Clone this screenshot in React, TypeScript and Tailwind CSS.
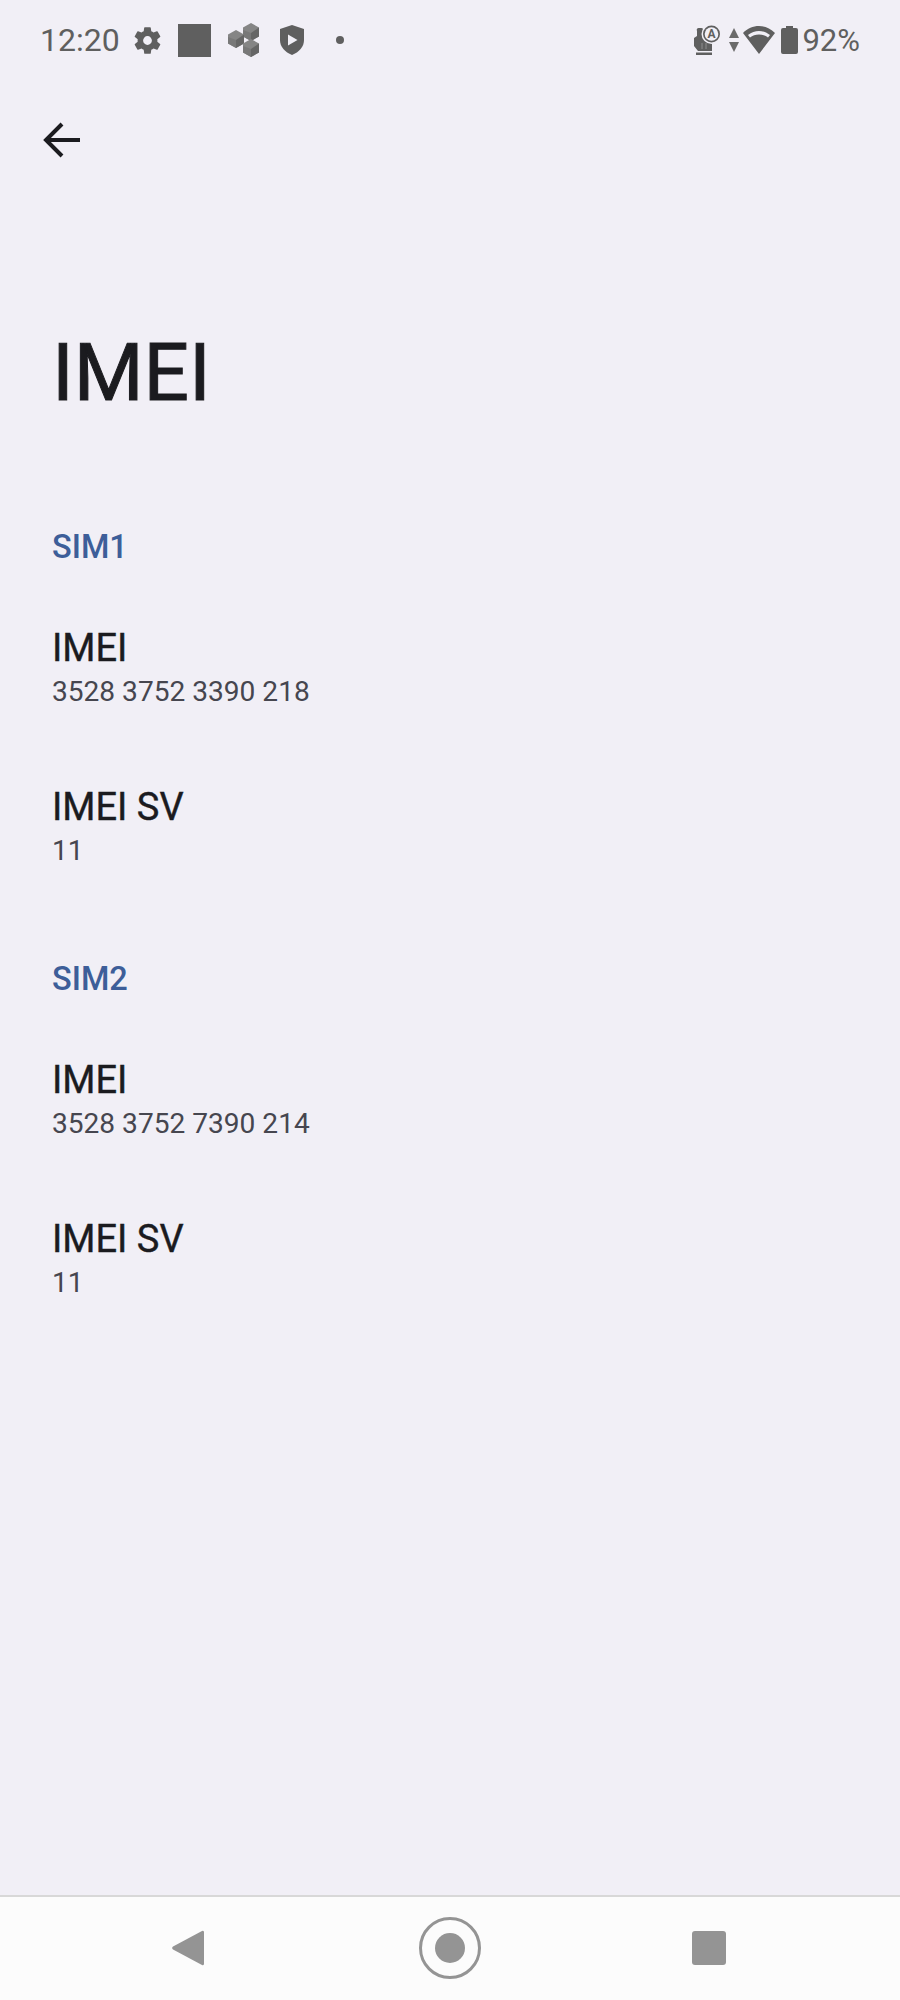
import React from "react";

const SettingsGear = () => (
  <svg viewBox="0 0 24 24" className="w-[33px] h-[33px] fill-[#5f5f5f]">
    <path d="M19.14 12.94c.04-.3.06-.61.06-.94s-.02-.64-.07-.94l2.03-1.58a.5.5 0 0 0 .12-.64l-1.92-3.32a.5.5 0 0 0-.61-.22l-2.39.96a7 7 0 0 0-1.62-.94l-.36-2.54a.48.48 0 0 0-.48-.41h-3.84a.48.48 0 0 0-.47.41l-.36 2.54c-.59.24-1.13.57-1.62.94l-2.39-.96a.49.49 0 0 0-.59.22L2.74 8.84a.48.48 0 0 0 .12.64l2.03 1.58c-.05.3-.09.63-.09.94s.02.64.07.94l-2.03 1.58a.5.5 0 0 0-.12.64l1.92 3.32c.12.22.37.29.59.22l2.39-.96c.5.38 1.03.7 1.62.94l.36 2.54c.05.24.24.41.48.41h3.84c.24 0 .44-.17.47-.41l.36-2.54c.59-.24 1.13-.56 1.62-.94l2.39.96c.22.08.47 0 .59-.22l1.92-3.32a.48.48 0 0 0-.12-.64zM12 15.200A3.200 3.200 0 1 1 12 8.800a3.200 3.200 0 0 1 0 6.400z" />
  </svg>
);

const Cube = ({ x, y }: { x: number; y: number }) => (
  <g transform={`translate(${x} ${y})`}>
    <path d="M0-9L8-4.500V4.500L0 9-8 4.500V-4.500z" fill="#858585" />
    <path d="M8-4.500V4.500L0 9V1z" fill="#666666" />
    <path d="M-8 4.500L0 9V1L-8-2z" fill="#787878" />
  </g>
);

const Cubes = () => (
  <svg viewBox="0 0 34 34" className="w-[34px] h-[34px]">
    <Cube x={24} y={9} />
    <Cube x={9} y={16} />
    <Cube x={24} y={25} />
  </svg>
);

const Shield = () => (
  <svg viewBox="0 0 26 30" className="w-[26px] h-[30px]">
    <path d="M13 0L25 4v11c0 7-5 12-12 15C6 27 1 22 1 15V4z" fill="#5f5f5f" />
    <path d="M9 9.500l9.500 5.500L9 20.500z" fill="#f1eff6" />
  </svg>
);

const HandBadge = () => (
  <svg viewBox="0 0 28 30" className="w-[28px] h-[30px]">
    <path d="M3 27.500h16V30H3z" fill="#5f5f5f" />
    <path d="M4 6a2 2 0 0 1 2-3h2a2 2 0 0 1 2 3v8l9 2v10H5l-4-5v-8l3-2z" fill="#5f5f5f" />
    <path d="M9 18v6M13 18v6" stroke="#8f8f8f" strokeWidth="1" />
    <circle cx="18.500" cy="9" r="10" fill="#f1eff6" />
    <circle cx="18.500" cy="9" r="8.500" fill="#5f5f5f" />
    <circle cx="18.500" cy="9" r="6.800" fill="#f1eff6" />
    <text x="18.500" y="13.200" textAnchor="middle" fontSize="12" fontWeight="700" fill="#5f5f5f" fontFamily="Roboto, sans-serif">
      A
    </text>
  </svg>
);

const DataArrows = () => (
  <svg viewBox="0 0 10 24" className="w-[10px] h-[24px] fill-[#6a6a6a]">
    <path d="M5 0l5 10H0z" />
    <path d="M5 24l5-10H0z" />
  </svg>
);

const Wifi = () => (
  <svg viewBox="0 0 32 28" className="w-[32px] h-[28px] fill-[#5f5f5f]">
    <path d="M16 0C10 0 4.500 2.300 0 7l16 21L32 7C27.500 2.300 22 0 16 0zM16 5c4 0 7.500 1.300 11 4l-2 2.500C22.500 9.500 19.500 8.500 16 8.500S9.500 9.500 7 11.500L5 9c3.500-2.700 7-4 11-4z" />
  </svg>
);

const Battery = () => (
  <svg viewBox="0 0 17 28" className="w-[17px] h-[28px] fill-[#5f5f5f]">
    <path d="M5 0h7v2h3a2 2 0 0 1 2 2v22a2 2 0 0 1-2 2H2a2 2 0 0 1-2-2V4a2 2 0 0 1 2-2h3z" />
  </svg>
);

const StatusBar = () => (
  <div className="flex items-center justify-between h-[80px] pl-10 pr-10 text-[#5f5f5f]">
    <div className="flex items-center">
      <span className="text-[32px] leading-none w-[91px]">12:20</span>
      <SettingsGear />
      <div className="w-[33px] h-[33px] bg-[#5f5f5f] ml-[14px]" />
      <div className="ml-[16px]">
        <Cubes />
      </div>
      <div className="ml-[18px]">
        <Shield />
      </div>
      <div className="w-2 h-2 rounded-full bg-[#5f5f5f] ml-[31px]" />
    </div>
    <div className="flex items-center">
      <HandBadge />
      <div className="ml-[8px]">
        <DataArrows />
      </div>
      <div className="ml-[4px]">
        <Wifi />
      </div>
      <div className="ml-[6px]">
        <Battery />
      </div>
      <span className="text-[31px] leading-none ml-[4px]">92%</span>
    </div>
  </div>
);

const Row = ({ title, value }: { title: string; value: string }) => (
  <div className="h-[159px] pt-[30px]">
    <div className="text-[38px] leading-[48px] [-webkit-text-stroke:0.4px_#1b1b1f] text-[#1b1b1f]">{title}</div>
    <div className="text-[28.100px] leading-[39px] text-[#46464f]">{value}</div>
  </div>
);

const Section = ({ name, imei }: { name: string; imei: string }) => (
  <div>
    <div className="text-[32.500px] leading-[40px] font-medium text-[#3d5e99] pt-[1px] pb-[27px]">{name}</div>
    <Row title="IMEI" value={imei} />
    <Row title="IMEI SV" value="11" />
  </div>
);

const NavBar = () => (
  <div className="h-[105px] bg-[#fcfcfc] border-t-2 border-[#d8d8d8] flex items-center">
    <div className="flex w-full items-center justify-center pr-[2px] pb-[2px]">
      <svg viewBox="0 0 32 36" className="w-[32px] h-[36px] fill-[#949494]">
        <path d="M30 1a1.500 1.500 0 0 1 2 1v32a1.500 1.500 0 0 1-2 1L1 19.500a2 2 0 0 1 0-3z" />
      </svg>
      <div className="ml-[215px] w-[62px] h-[62px] rounded-full border-[3px] border-[#949494] flex items-center justify-center">
        <div className="w-[30px] h-[30px] rounded-full bg-[#949494]" />
      </div>
      <div className="ml-[211px] w-[34px] h-[34px] rounded-[3px] bg-[#949494]" />
    </div>
  </div>
);

export default function App() {
  return (
    <div className="flex flex-col w-[900px] h-[2000px] bg-[#f1eff6] font-['Roboto',sans-serif]">
      <StatusBar />
      <div className="flex-1 px-[52px]">
        <svg viewBox="0 0 40 36" className="w-[40px] h-[36px] mt-[42px] -ml-[10px] fill-none stroke-[#1b1b1f] stroke-[4]">
          <path d="M38 18H5M20 2L4 18l16 16" />
        </svg>
        <h1 className="mt-[165px] text-[80px] leading-[100px] [-webkit-text-stroke:1px_#1b1b1f] text-[#1b1b1f]">IMEI</h1>
        <div className="mt-[103px] flex flex-col gap-[46px]">
          <Section name="SIM1" imei="3528 3752 3390 218" />
          <Section name="SIM2" imei="3528 3752 7390 214" />
        </div>
      </div>
      <NavBar />
    </div>
  );
}
